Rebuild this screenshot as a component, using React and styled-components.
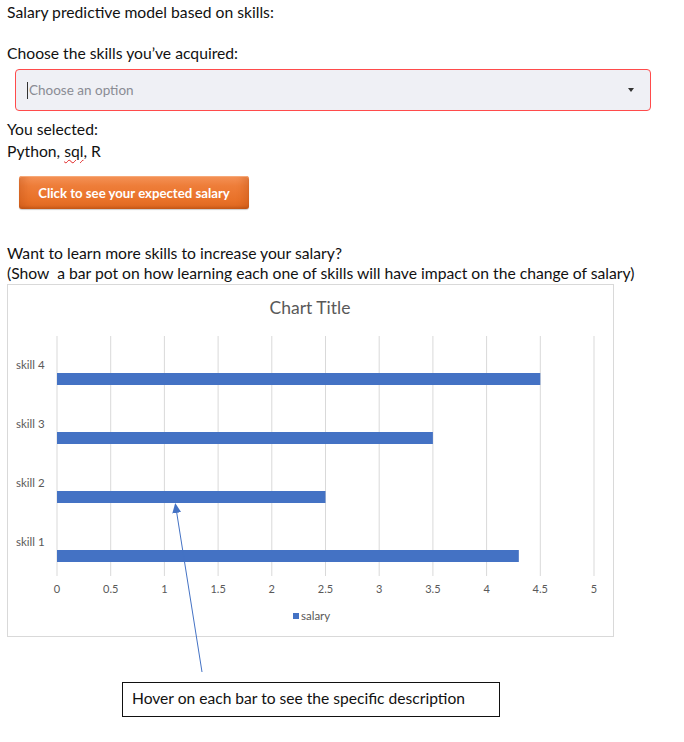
import React from "react";
import styled, { createGlobalStyle } from "styled-components";

const Global = createGlobalStyle`
  html, body { margin: 0; padding: 0; background: #fff; }
  body { font-family: Lato, "Open Sans", sans-serif; color: #111; }
`;

const Page = styled.div`
  position: relative;
  width: 684px;
  height: 742px;
  padding: 2px 0 0 7px;
  box-sizing: border-box;
`;

const Line = styled.div`
  font-size: 15.7px;
  line-height: ${(p) => p.$lh || 20}px;
  margin-top: ${(p) => p.$mt || 0}px;
  white-space: pre;
`;

const Misspelled = styled.span`
  text-decoration: underline wavy #e02020;
  text-decoration-thickness: 1px;
  text-underline-offset: 2px;
`;

const Select = styled.div`
  margin: 6px 0 0 8px;
  width: 636px;
  height: 42px;
  box-sizing: border-box;
  border: 1px solid #ff4b4b;
  border-radius: 4px;
  background: #eff0f5;
  display: flex;
  align-items: center;
  padding: 0 16px 0 11px;
`;

const Cursor = styled.span`
  width: 1px;
  height: 17px;
  background: #333;
  margin-right: 1px;
`;

const Placeholder = styled.span`
  flex: 1;
  font-size: 13.5px;
  color: #8a8c94;
`;

const Caret = styled.span`
  width: 0;
  height: 0;
  border-left: 3.5px solid transparent;
  border-right: 3.5px solid transparent;
  border-top: 4px solid #333;
`;

const Button = styled.div`
  margin: 14px 0 0 12px;
  width: 230px;
  height: 33px;
  box-sizing: border-box;
  border-radius: 3px;
  background: linear-gradient(#f49257 0%, #ee7d39 30%, #e87128 75%, #dc661f 100%);
  box-shadow: inset 0 1px 0 #f7a877, inset 0 -2px 2px rgba(150, 60, 10, 0.3),
    inset 12px 0 6px -6px rgba(190, 80, 20, 0.3), inset -12px 0 6px -6px rgba(190, 80, 20, 0.3),
    0 1px 1px rgba(0, 0, 0, 0.2);
  display: flex;
  align-items: center;
  justify-content: center;
  color: #fff;
  font-size: 13.2px;
  font-weight: 700;
`;

const ChartBox = styled.div`
  margin-top: 1px;
  width: 607px;
  height: 353px;
  box-sizing: border-box;
  border: 1px solid #d9d9d9;
`;

const Callout = styled.div`
  margin: 45px 0 0 115px;
  width: 378px;
  height: 35px;
  box-sizing: border-box;
  border: 1px solid #111;
  display: flex;
  align-items: center;
  padding: 0 0 3px 9px;
  font-size: 15.6px;
`;

const Overlay = styled.svg`
  position: absolute;
  left: 0;
  top: 0;
  pointer-events: none;
`;

const bars = [
  { label: "skill 4", value: 4.5, y: 88 },
  { label: "skill 3", value: 3.5, y: 147 },
  { label: "skill 2", value: 2.5, y: 206 },
  { label: "skill 1", value: 4.3, y: 265 },
];

const ticks = ["0", "0.5", "1", "1.5", "2", "2.5", "3", "3.5", "4", "4.5", "5"];
const x0 = 49;
const step = 53.7;

function Chart() {
  return (
    <svg width="605" height="351" style={{ display: "block" }}>
      <text x="302" y="29" textAnchor="middle" fontSize="17.5" fill="#595959" fontFamily="Lato, sans-serif">
        Chart Title
      </text>
      {ticks.map((t, i) => (
        <line key={t} x1={x0 + i * step} x2={x0 + i * step} y1="51" y2="291" stroke="#d9d9d9" strokeWidth="1" />
      ))}
      {bars.map((b) => (
        <g key={b.label}>
          <rect x={x0} y={b.y} width={b.value * 2 * step} height="12" fill="#4472c4" />
          <text x="8" y={b.y - 4} fontSize="11.5" fill="#595959" fontFamily="Lato, sans-serif">
            {b.label}
          </text>
        </g>
      ))}
      {ticks.map((t, i) => (
        <text key={"l" + t} x={x0 + i * step} y="308" textAnchor="middle" fontSize="11" fill="#595959" fontFamily="Lato, sans-serif">
          {t}
        </text>
      ))}
      <rect x="285" y="328" width="6" height="6" fill="#4472c4" />
      <text x="293" y="335" fontSize="11.5" fill="#595959" fontFamily="Lato, sans-serif">
        salary
      </text>
    </svg>
  );
}

export default function App() {
  return (
    <Page>
      <Global />
      <Line>Salary predictive model based on skills:</Line>
      <Line $mt={21}>Choose the skills you’ve acquired:</Line>
      <Select>
        <Cursor />
        <Placeholder>Choose an option</Placeholder>
        <Caret />
      </Select>
      <Line $lh={22} $mt={7}>You selected:</Line>
      <Line $lh={22}>
        Python, <Misspelled>sql</Misspelled>, R
      </Line>
      <Button>Click to see your expected salary</Button>
      <Line $mt={34}>Want to learn more skills to increase your salary?</Line>
      <Line>(Show  a bar pot on how learning each one of skills will have impact on the change of salary)</Line>
      <ChartBox>
        <Chart />
      </ChartBox>
      <Callout>Hover on each bar to see the specific description</Callout>
      <Overlay width="684" height="742">
        <defs>
          <marker id="ah" markerWidth="10" markerHeight="9" refX="8" refY="4.5" orient="auto" markerUnits="userSpaceOnUse">
            <path d="M0,0 L10,4.5 L0,9 Z" fill="#4472c4" />
          </marker>
        </defs>
        <line x1="202" y1="672" x2="175.5" y2="505" stroke="#4472c4" strokeWidth="1" markerEnd="url(#ah)" />
      </Overlay>
    </Page>
  );
}
